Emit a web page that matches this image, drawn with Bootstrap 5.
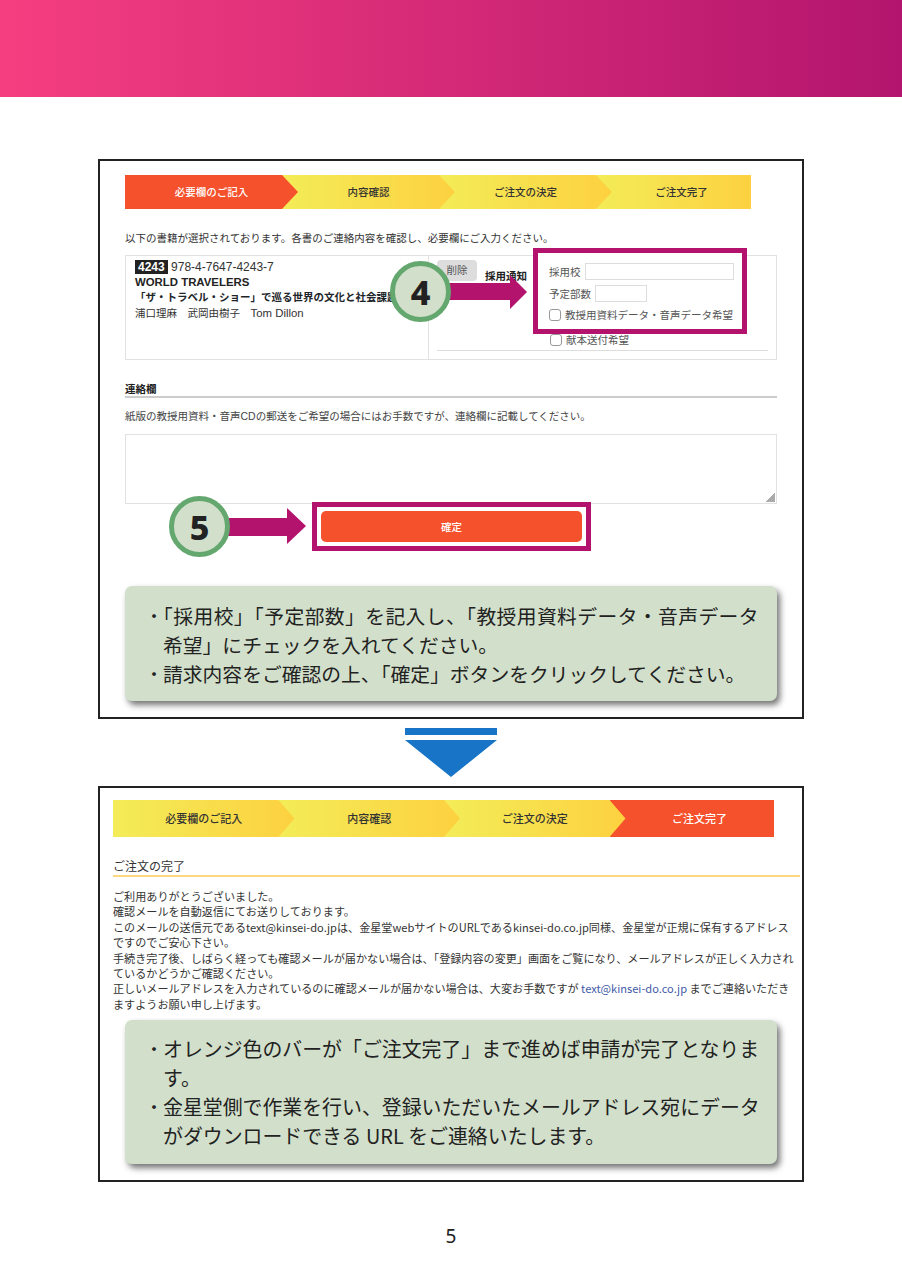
<!DOCTYPE html>
<html lang="ja">

<head>
    <meta charset="UTF-8">
    <meta name="viewport" content="width=device-width, initial-scale=1.0">
    <title>注文手順 5</title>
    <link href="https://cdn.jsdelivr.net/npm/bootstrap@5.3.0/dist/css/bootstrap.min.css" rel="stylesheet">
    <style>
        body {
            background: #fff;
            color: #333;
            font-family: "Liberation Sans", "Noto Sans CJK JP", sans-serif;
            font-size: 10.5px;
            line-height: 16px;
        }

        .page-head {
            height: 97px;
            background: linear-gradient(90deg, #f53e80, #b3156e);
        }

        .sheet {
            position: relative;
            margin-left: 98px;
            width: 706px;
            border: 2px solid #222;
        }

        .sheet-a {
            margin-top: 62px;
            padding: 14px 25px 16px;
        }

        .sheet-b {
            padding: 12px 2px 16px 13px;
        }

        .flow-step {
            position: relative;
            flex: none;
            height: 34px;
            margin-right: -16px;
            background: linear-gradient(90deg, #f3ec58, #fdd140);
            color: #333;
            font-weight: 500;
            clip-path: polygon(0 0, calc(100% - 16px) 0, 100% 50%, calc(100% - 16px) 100%, 0 100%);
        }

        .flow-step:nth-child(1) { z-index: 4; }
        .flow-step:nth-child(2) { z-index: 3; }
        .flow-step:nth-child(3) { z-index: 2; }
        .flow-step:nth-child(4) { z-index: 1; margin-right: 0; padding-left: 16px; clip-path: none; }

        .flow-step.is-now {
            background: #f4512c;
            color: #fff;
        }

        .steps-a { width: 626px; }
        .steps-a .flow-step { width: 173px; }
        .steps-a .flow-step:nth-child(4) { width: 155px; }

        .steps-b { width: 660px; height: 37px; }
        .steps-b .flow-step { width: 181.5px; height: 37px; font-size: 11px; }
        .steps-b .flow-step:nth-child(4) { width: 164px; }

        .book-box {
            height: 105px;
            border: 1px solid #e2e2e2;
        }

        .book-left {
            width: 303px;
            padding: 4px 9px;
            border-right: 1px solid #e2e2e2;
            font-size: 10.5px;
            line-height: 15.2px;
            white-space: nowrap;
            overflow: hidden;
        }

        .book-code {
            font-size: 12px;
        }

        .book-en {
            font-size: 11.4px;
            font-weight: 700;
            color: #222;
        }

        .book-au {
            font-size: 11.4px;
        }

        .book-no {
            background: #222;
            color: #fff;
            font-weight: 700;
            padding: 0 3px;
        }

        .book-right {
            position: relative;
            flex: 1;
            padding: 4px 8px 0;
        }

        .del-btn {
            width: 40px;
            height: 21px;
            padding: 0;
            border: 0;
            border-radius: 4px;
            background: #ddd;
            color: #555;
            font-size: 10.5px;
            line-height: 21px;
        }

        .notice-label {
            margin: 8px 0 0 8px;
            font-weight: 700;
            color: #222;
        }

        .mark-box {
            position: absolute;
            border: 5px solid #b3126d;
        }

        .mark-form {
            left: 104px;
            top: -8px;
            width: 214px;
            height: 86px;
            padding: 10px 0 0 11px;
            z-index: 2;
            background: #fff;
            color: #555;
            white-space: nowrap;
        }

        .mark-form input[type=text] {
            height: 17px;
            padding: 0;
            border: 1px solid #ddd;
        }

        .chk {
            flex: none;
            width: 12px;
            height: 12px;
            margin: 0;
            border: 1px solid #999;
            border-radius: 3px;
            appearance: none;
            background: #fff;
        }

        .gift-row {
            position: absolute;
            left: 121px;
            top: 76px;
            color: #555;
        }

        .book-rule {
            position: absolute;
            left: 8px;
            right: 8px;
            top: 94px;
            border-top: 1px solid #ddd;
        }

        .sec-title {
            margin-top: 21px;
            border-bottom: 2px solid #ccc;
            font-weight: 700;
            color: #222;
            height: 17px;
        }

        .sec-help {
            margin: 10px 0 0;
            color: #444;
        }

        .memo-area {
            display: block;
            width: 100%;
            height: 70px;
            margin-top: 10px;
            border: 1px solid #e2e2e2;
            border-radius: 0;
            resize: none;
            background: linear-gradient(135deg, transparent 50%, #aaa 50%) no-repeat right 1px bottom 1px / 9px 9px;
        }

        .go-btn {
            display: block;
            width: 261px;
            height: 31px;
            margin: 7px 0 0 196px;
            padding: 0;
            border: 0;
            border-radius: 5px;
            background: #f4512c;
            color: #fff;
            font-size: 10.5px;
            font-weight: 500;
        }

        .mark-btn {
            left: 212px;
            top: 341px;
            width: 279px;
            height: 49px;
        }

        .step-dot {
            position: absolute;
            width: 61px;
            height: 61px;
            border: 5px solid #65a86f;
            border-radius: 50%;
            background: #d2e0cb;
            color: #222;
            font-family: "Noto Sans", sans-serif;
            font-size: 34px;
            font-weight: 800;
            line-height: 1;
            z-index: 3;
        }

        .dot-4 { left: 290px; top: 100px; }
        .dot-5 { left: 69px; top: 335px; }

        .step-arrow {
            position: absolute;
            z-index: 2;
        }

        .arrow-4 { left: 349px; top: 114px; }
        .arrow-5 { left: 128px; top: 347px; }

        .note-box {
            padding: 14.5px 0 13.5px 20px;
            border-radius: 7px;
            background: #d2e0cb;
            box-shadow: 3px 4px 6px rgba(0, 0, 0, .55);
            color: #222;
            font-family: "Noto Sans CJK JP", sans-serif;
            font-size: 19.8px;
            line-height: 29px;
            white-space: nowrap;
            text-spacing-trim: trim-start;
        }

        .note-mark {
            flex: none;
            width: 18px;
            font-size: 18px;
            text-align: center;
        }

        .note-wide {
            letter-spacing: .4px;
        }

        .note-a { margin-top: 44px; }

        .note-b {
            width: 652px;
            margin: 7.5px 0 0 12px;
            font-size: 19.9px;
        }

        .done-title {
            margin-top: 20px;
            height: 20px;
            border-bottom: 2px solid #fdd680;
            font-family: "Noto Sans CJK JP", sans-serif;
            font-size: 12px;
            line-height: 18px;
            color: #333;
        }

        .done-text {
            margin: 12px 0 0;
            font-family: "Noto Sans CJK JP", sans-serif;
            font-size: 11.1px;
            line-height: 15.4px;
            white-space: nowrap;
        }

        .done-text a {
            color: #3f5aa8;
            text-decoration: none;
        }

        .down-mark {
            height: 67px;
        }

        .page-no {
            margin-top: 42px;
            font-family: "Noto Sans", sans-serif;
            font-size: 19px;
            line-height: 24px;
            text-align: center;
            color: #222;
        }
    </style>
</head>

<body>
    <div class="page-head"></div>

    <div class="sheet sheet-a">
        <div class="steps-a d-flex">
            <div class="flow-step is-now d-flex align-items-center justify-content-center">必要欄のご記入</div>
            <div class="flow-step d-flex align-items-center justify-content-center">内容確認</div>
            <div class="flow-step d-flex align-items-center justify-content-center">ご注文の決定</div>
            <div class="flow-step d-flex align-items-center justify-content-center">ご注文完了</div>
        </div>

        <p class="mb-0" style="margin-top:21px">以下の書籍が選択されております。各書のご連絡内容を確認し、必要欄にご入力ください。</p>

        <div class="book-box d-flex" style="margin-top:9px">
            <div class="book-left">
                <div class="book-code"><span class="book-no">4243</span> 978-4-7647-4243-7</div>
                <div class="book-en">WORLD TRAVELERS</div>
                <div class="fw-bold text-dark">「ザ・トラベル・ショー」で巡る世界の文化と社会課題</div>
                <div>浦口理麻　武岡由樹子　<span class="book-au">Tom Dillon</span></div>
            </div>
            <div class="book-right">
                <div class="d-flex align-items-start">
                    <button class="del-btn" type="button">削除</button>
                    <div class="notice-label">採用通知</div>
                </div>
                <div class="mark-box mark-form">
                    <div class="d-flex align-items-center gap-1" style="height:17px">
                        <span>採用校</span><input type="text" style="width:149px">
                    </div>
                    <div class="d-flex align-items-center gap-1" style="height:17px;margin-top:5px">
                        <span>予定部数</span><input type="text" style="width:52px">
                    </div>
                    <div class="d-flex align-items-center gap-1" style="margin-top:5px">
                        <input class="chk" type="checkbox"><span>教授用資料データ・音声データ希望</span>
                    </div>
                </div>
                <div class="gift-row d-flex align-items-center gap-1">
                    <input class="chk" type="checkbox"><span>献本送付希望</span>
                </div>
                <div class="book-rule"></div>
            </div>
        </div>

        <div class="sec-title">連絡欄</div>
        <p class="sec-help">紙版の教授用資料・音声CDの郵送をご希望の場合にはお手数ですが、連絡欄に記載してください。</p>
        <textarea class="memo-area"></textarea>
        <button class="go-btn" type="button">確定</button>

        <div class="note-box note-a">
            <div class="d-flex"><span class="note-mark">・</span><span><span class="note-wide">「採用校」「予定部数」を記入し、「教授用資料データ・音声データ</span><br>希望」にチェックを入れてください。</span></div>
            <div class="d-flex"><span class="note-mark">・</span><span>請求内容をご確認の上、「確定」ボタンをクリックしてください。</span></div>
        </div>

        <div class="step-dot dot-4 d-flex align-items-center justify-content-center">4</div>
        <svg class="step-arrow arrow-4" width="80" height="34" viewBox="0 0 80 34"><path d="M0 8H61V0L78 17 61 34V25H0Z" fill="#b3126d"/></svg>
        <div class="mark-box mark-btn"></div>
        <div class="step-dot dot-5 d-flex align-items-center justify-content-center">5</div>
        <svg class="step-arrow arrow-5" width="78" height="36" viewBox="0 0 78 36"><path d="M0 10H59V0L78 18 59 36V28H0Z" fill="#b3126d"/></svg>
    </div>

    <div class="down-mark d-flex justify-content-center">
        <svg width="92" height="67" viewBox="0 0 92 67"><path d="M0 9H92V16H0ZM0 21H92L46 58Z" fill="#1774c6"/></svg>
    </div>

    <div class="sheet sheet-b">
        <div class="steps-b d-flex">
            <div class="flow-step d-flex align-items-center justify-content-center">必要欄のご記入</div>
            <div class="flow-step d-flex align-items-center justify-content-center">内容確認</div>
            <div class="flow-step d-flex align-items-center justify-content-center">ご注文の決定</div>
            <div class="flow-step is-now d-flex align-items-center justify-content-center">ご注文完了</div>
        </div>

        <div class="done-title">ご注文の完了</div>
        <p class="done-text">ご利用ありがとうございました。<br>
            確認メールを自動返信にてお送りしております。<br>
            このメールの送信元であるtext@kinsei-do.jpは、金星堂webサイトのURLであるkinsei-do.co.jp同様、金星堂が正規に保有するアドレス<br>
            ですのでご安心下さい。<br>
            手続き完了後、しばらく経っても確認メールが届かない場合は、「登録内容の変更」画面をご覧になり、メールアドレスが正しく入力され<br>
            ているかどうかご確認ください。<br>
            正しいメールアドレスを入力されているのに確認メールが届かない場合は、大変お手数ですが <a href="#">text@kinsei-do.co.jp</a> までご連絡いただき<br>
            ますようお願い申し上げます。</p>

        <div class="note-box note-b">
            <div class="d-flex"><span class="note-mark">・</span><span>オレンジ色のバーが「ご注文完了」まで進めば申請が完了となりま<br>す。</span></div>
            <div class="d-flex"><span class="note-mark">・</span><span>金星堂側で作業を行い、登録いただいたメールアドレス宛にデータ<br>がダウンロードできる URL をご連絡いたします。</span></div>
        </div>
    </div>

    <div class="page-no">5</div>

    <script src="https://cdn.jsdelivr.net/npm/bootstrap@5.3.0/dist/js/bootstrap.bundle.min.js"></script>
</body>

</html>
